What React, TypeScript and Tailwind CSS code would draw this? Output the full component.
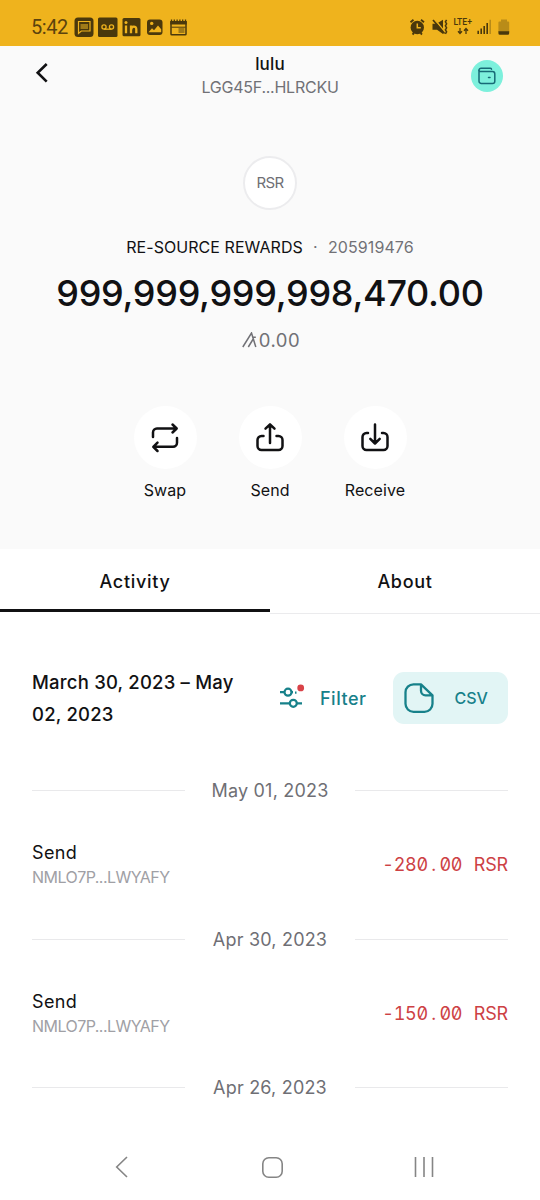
import type { ReactNode } from "react";

const INK = "#111113";
const BAR = "#4a380c";
const TEAL = "#17818a";

function StatusBar() {
  return (
    <div className="flex h-[46px] items-start justify-between bg-[#efb31d] pt-[16px] pr-[30px] pl-[31px] text-[#5c430e]">
      <div className="flex h-[22px] items-center">
        <span className="w-[43px] font-[Roboto] text-[20px] leading-[22px] tracking-[-0.4px] whitespace-nowrap">5:42</span>
        <svg width="114" height="22" viewBox="74 16 114 22" fill="none">
          <rect x="74.5" y="17.5" width="19" height="19.500" rx="3.500" fill={BAR} />
          <path d="M78.500 21.500h11.500v9.500h-8.700l-2.800 2.500z" stroke="#efb31d" strokeWidth="1.200" />
          <path d="M80.500 24h7.500v5h-7.500z" fill="#a07a18" />
          <rect x="98" y="17.500" width="19.500" height="19.500" rx="1.500" fill={BAR} />
          <g stroke="#efb31d" strokeWidth="1.300">
            <circle cx="104" cy="27" r="2.100" />
            <circle cx="111.500" cy="27" r="2.100" />
            <path d="M104 29.200h7.500" />
          </g>
          <rect x="122.500" y="18" width="18" height="18.300" rx="1.500" fill={BAR} />
          <path d="M126 25.500v7.800M131 25.500v7.800M131.300 29.500c0-3.800 5-4 5-.3v4.100" stroke="#efb31d" strokeWidth="2.300" />
          <circle cx="126" cy="22.400" r="1.500" fill="#efb31d" />
          <rect x="147" y="19.500" width="15.500" height="15.500" rx="3" fill={BAR} />
          <path d="M148.500 32.200l3.500-4 2 2 4-4.700 3.200 3.700v3z" fill="#efb31d" />
          <circle cx="151.700" cy="23.400" r="1.700" fill="#efb31d" />
          <path d="M171 22h15v12a.8.8 0 0 1-.8.8h-13.400a.8.800 0 0 1-.8-.8z" stroke={BAR} strokeWidth="1.500" />
          <path d="M170.300 21h16.400v3.500h-16.400z" fill={BAR} />
          <path d="M171.500 21.200v-1.700m2.800 1.700v-1.700m2.800 1.700v-1.700m2.800 1.700v-1.700m2.800 1.700v-1.700m2.800 1.700v-1.700" stroke={BAR} strokeWidth="1.300" />
          <path d="M171.500 27.200h14" stroke={BAR} strokeWidth="1" />
          <path d="M178.500 28h6v5h-6z" fill="#a07a18" />
        </svg>
      </div>
      <svg width="101" height="22" viewBox="409 16 101 22" fill="none">
        <circle cx="417.300" cy="27.500" r="6.700" fill={BAR} />
        <path d="M410.500 22.300l3-2.500M424 22.300l-3-2.500M412.500 34.500l1.500-1.500M422 34.500l-1.500-1.500" stroke={BAR} strokeWidth="1.800" />
        <path d="M417.300 23.500v4.200h3.500" stroke="#efb31d" strokeWidth="1.500" />
        <path d="M432.500 23.800h4l6.500-4v14.200l-6-4.200h-4.500z" fill={BAR} />
        <path d="M434.500 19.200l11 13.500" stroke="#efb31d" strokeWidth="1.500" />
        <path d="M433 20l11.500 13.500" stroke={BAR} strokeWidth="1.700" />
        <path d="M446.600 19.800l-1.200 2 1.200 2-1.200 2 1.200 2-1.200 2 1.200 2-1.200 2" stroke={BAR} strokeWidth="1.500" />
        <text x="453.500" y="25.300" fill={BAR} fontFamily="Roboto, sans-serif" fontWeight="500" fontSize="8.500" textLength="18.500" lengthAdjust="spacingAndGlyphs">LTE+</text>
        <path d="M460 28v5.500m-2-2.300l2 2.300 2-2.300M466 34v-5.500m-2 2.300l2-2.300 2 2.300" stroke={BAR} strokeWidth="1.300" />
        <path d="M478.200 34v-3.300M481.200 34v-5.500M484.200 34v-8M487.200 34v-11" stroke={BAR} strokeWidth="1.600" />
        <path d="M490.200 34v-14.300" stroke="#b88b18" strokeWidth="1.600" />
        <path d="M501 19.500h6v2h1.200a1 1 0 0 1 1 1v9.500h-10.800v-9.500a1 1 0 0 1 1-1h1.600z" fill="#b98c18" />
        <path d="M498.400 31.300h10.800v2a1.500 1.500 0 0 1-1.500 1.500h-7.800a1.500 1.500 0 0 1-1.500-1.500z" fill={BAR} />
      </svg>
    </div>
  );
}

function Header() {
  return (
    <header className="flex h-[64px] items-start justify-between pr-[37px] pl-[32px]">
      <svg className="mt-[15px]" width="34" height="24" viewBox="32 61 34 24" fill="none">
        <path d="M46.700 64L37.700 72.800L46.700 81.600" stroke={INK} strokeWidth="2.600" />
      </svg>
      <div className="ml-[3px] flex flex-col items-center pt-[7px]">
        <h1 className="text-[17px] leading-[23px] font-medium tracking-[0.15px]">lulu</h1>
        <p className="text-[16px] leading-[23px] tracking-[-0.25px] text-[#717176]">LGG45F...HLRCKU</p>
      </div>
      <div className="mt-[13.5px] flex size-[32px] items-center justify-center rounded-full bg-[#7df0dc]">
        <svg width="20" height="20" viewBox="0 0 20 20" fill="none" stroke="#176a76" strokeWidth="1.500" strokeLinecap="round">
          <path d="M13.500 2.200H4.300a2.100 2.100 0 0 0-2.300 2.300M13.500 2.200q1 0 1 1" />
          <path d="M2 4.500v10.700a2.300 2.300 0 0 0 2.300 2.300h11.200a2.300 2.300 0 0 0 2.300-2.300V7.900a2.300 2.300 0 0 0-2.300-2.300H3.500Q2 5.600 2 4.500" />
          <path d="M11.500 11.600h1.500" />
        </svg>
      </div>
    </header>
  );
}

function Action({ label, children }: { label: string; children: ReactNode }) {
  return (
    <button className="flex w-[63px] flex-col items-center">
      <span className="flex size-[63px] items-center justify-center rounded-full bg-white">
        <svg width="32" height="32" viewBox="-16 -16 32 32" fill="none" stroke={INK} strokeWidth="2.500" strokeLinecap="round" strokeLinejoin="round">
          {children}
        </svg>
      </span>
      <span className="mt-[10px] text-[16px] leading-[22px] tracking-[0.1px] whitespace-nowrap">{label}</span>
    </button>
  );
}

function DateDivider({ date }: { date: string }) {
  return (
    <div className="flex h-[30px] items-center justify-between">
      <span className="mb-px h-px w-[153px] bg-[#e9e9eb]" />
      <span className="text-[18px] leading-[30px] tracking-[0.2px] text-[#6f6f75]">{date}</span>
      <span className="mb-px h-px w-[153px] bg-[#e9e9eb]" />
    </div>
  );
}

function Transaction({ amount }: { amount: string }) {
  return (
    <div className="flex h-[118.500px] items-center justify-between">
      <div>
        <p className="text-[18px] leading-[24px] tracking-[0.35px]">Send</p>
        <p className="text-[16px] leading-[24px] tracking-[-0.55px] text-[#a0a0a5]">NMLO7P...LWYAFY</p>
      </div>
      <p className="text-[18px] leading-[24px] whitespace-nowrap text-[#cd4144] [font-feature-settings:'zero','tnum']">
        {amount.split("").map((c, i) => (
          <span key={i} className="inline-block w-[11.450px] text-center whitespace-pre">{c}</span>
        ))}
      </p>
    </div>
  );
}

export default function App() {
  return (
    <div className="flex h-[1200px] w-[540px] flex-col overflow-hidden bg-white font-[Inter,sans-serif] text-[#111113]">
      <StatusBar />
      <section className="h-[503px] shrink-0 bg-[#fafafa]">
        <Header />
        <div className="flex flex-col items-center pt-[46px]">
          <div className="flex size-[54px] items-center justify-center rounded-full border-2 border-[#ececee] bg-white text-[15px] tracking-[-0.6px] text-[#6f6f75]">RSR</div>
          <div className="mt-[25px] flex h-[24px] items-center text-[16px] leading-[24px] whitespace-nowrap">
            <span className="tracking-[0.06px]">RE-SOURCE REWARDS</span>
            <span className="w-[25px] text-center text-[#717176]">·</span>
            <span className="tracking-[0.1px] text-[#717176]">205919476</span>
          </div>
          <p className="mt-[10px] text-[36px] leading-[48px] font-medium tracking-[-0.27px] whitespace-nowrap">999,999,999,998,470.00</p>
          <p className="mt-[10px] ml-[2px] flex h-[26px] items-center text-[18.500px] leading-[26px] text-[#717176]">
            <svg width="16" height="16" viewBox="0 0 16 16" fill="none" stroke="#717176" strokeWidth="1.500">
              <path d="M.8 15L9.500 1L13.800 15M6.300 15L11.500 6.500M10.700 5.300H13.800" />
            </svg>
            <span className="ml-[1px] tracking-[0.5px]">0.00</span>
          </p>
          <div className="mt-[53px] flex gap-[42px]">
            <Action label="Swap">
              <path d="M-12-1v-4.500a4 4 0 0 1 4-4H11.500M7.500-13.500l4.200 4-4.200 4M12 0v4.800a4 4 0 0 1-4 4H-11.500M-7.500 13l-4.200-4.200 4.200-4.200" />
            </Action>
            <Action label="Send">
              <path d="M0 5V-13M-4.500-9.300L0-13.700 4.500-9.300M-6.500-2h-2a4 4 0 0 0-4 4v6a4 4 0 0 0 4 4h17a4 4 0 0 0 4-4v-6a4 4 0 0 0-4-4h-2" />
            </Action>
            <Action label="Receive">
              <path d="M0 5V-13.500M-4.700 .8L0 5.500 4.700 .8M-7-5h-1.500a4 4 0 0 0-4 4v9a4 4 0 0 0 4 4h17a4 4 0 0 0 4-4v-9a4 4 0 0 0-4-4H7" />
            </Action>
          </div>
        </div>
      </section>
      <nav className="grid h-[65px] shrink-0 grid-cols-2 text-[18px] leading-[24px] font-medium tracking-[0.7px]">
        <button className="mb-[2px] flex items-start justify-center border-b-[3px] border-[#111113] pt-[21px]">Activity</button>
        <button className="flex items-start justify-center border-b border-[#ebebed] pt-[21px]">About</button>
      </nav>
      <main className="flex-1 px-[32px]">
        <div className="flex h-[162px] items-center pt-[6px]">
          <p className="w-[247px] text-[18.500px] leading-[32px] font-medium tracking-[0.2px]">March 30, 2023 – May<br />02, 2023</p>
          <button className="flex w-[113.500px] items-center text-[18px] font-medium text-[#17818a]">
            <svg width="27" height="28" viewBox="0 0 27 28" fill="none" stroke={TEAL} strokeWidth="2.200">
              <path d="M1 8.200h4M13 8.200h1M16 8.700h1.500M1 19.300h9M18 19.300h5" />
              <circle cx="9" cy="8.200" r="3.500" />
              <circle cx="14.300" cy="19.300" r="3.500" />
              <circle cx="21.700" cy="3.900" r="3.400" fill="#d94248" stroke="none" />
            </svg>
            <span className="ml-[14px] tracking-[0.5px]">Filter</span>
          </button>
          <button className="flex h-[52px] w-[115.500px] items-center rounded-[11px] bg-[#e2f5f5] pl-[10.500px] text-[16px] font-medium text-[#17818a]">
            <svg width="32" height="32" viewBox="0 0 32 32" fill="none" stroke={TEAL} strokeWidth="2.300" strokeLinejoin="round">
              <path d="M18 2.300H10.500a8 8 0 0 0-8 8v11.500a8 8 0 0 0 8 8h11a8 8 0 0 0 8-8V13.300zM18 2.300v6.500a4.500 4.500 0 0 0 4.500 4.500h7" />
            </svg>
            <span className="ml-[19.500px]">CSV</span>
          </button>
        </div>
        <DateDivider date="May 01, 2023" />
        <Transaction amount="-280.00 RSR" />
        <DateDivider date="Apr 30, 2023" />
        <Transaction amount="-150.00 RSR" />
        <DateDivider date="Apr 26, 2023" />
      </main>
      <footer className="flex h-[66px] shrink-0 items-center justify-between pr-[106px] pl-[115px]">
        <svg width="14" height="22" viewBox="0 0 14 22" fill="none" stroke="#858585" strokeWidth="1.600">
          <path d="M12 1L1.700 11L12 21" />
        </svg>
        <svg className="ml-[2px]" width="21" height="21" viewBox="0 0 21 21" fill="none" stroke="#858585" strokeWidth="1.600">
          <rect x=".8" y=".8" width="19.400" height="19.400" rx="6" />
        </svg>
        <svg width="20" height="20" viewBox="0 0 20 20" stroke="#858585" strokeWidth="1.600">
          <path d="M1.500 0v20M10 0v20M18.500 0v20" />
        </svg>
      </footer>
    </div>
  );
}
